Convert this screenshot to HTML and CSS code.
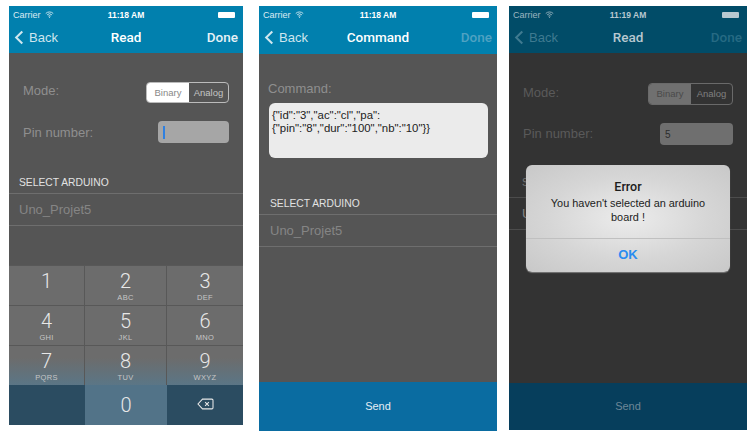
FILE: index.html
```html
<!DOCTYPE html>
<html>

<head>
    <title>Arduino Commands</title>
    <link rel="stylesheet" href="styles.css">
</head>

<body>

    <div class="screens">

        <!-- Read, keypad open -->
        <div class="phone phone-read">
            <div class="top-bar">
                <div class="status-bar">
                    <span class="carrier">Carrier
                        <svg class="wifi" viewBox="0 0 12 9"><path d="M1 3.2a7 7 0 0 1 10 0M2.8 5a4.5 4.5 0 0 1 6.4 0M4.5 6.7a2.2 2.2 0 0 1 3 0" /><circle cx="6" cy="8" r="0.8" /></svg>
                    </span>
                    <span class="time">11:18 AM</span>
                    <span class="battery"></span>
                </div>
                <div class="nav-bar">
                    <span class="back"><svg class="chevron" viewBox="0 0 10 16"><path d="M8.5 1.5 2 8l6.5 6.5" /></svg>Back</span>
                    <span class="nav-title">Read</span>
                    <span class="done">Done</span>
                </div>
            </div>
            <div class="content">
                <div class="form-row mode-row">
                    <span class="field-label">Mode:</span>
                    <div class="segment"><span class="seg-on">Binary</span><span class="seg-off">Analog</span></div>
                </div>
                <div class="form-row pin-row">
                    <span class="field-label">Pin number:</span>
                    <div class="pin-input"><span class="cursor"></span></div>
                </div>
                <div class="section-title">SELECT ARDUINO</div>
                <div class="board-row">Uno_Projet5</div>
            </div>
            <div class="keypad">
                <div class="key"><span class="digit">1</span></div>
                <div class="key"><span class="digit">2</span><span class="letters">ABC</span></div>
                <div class="key"><span class="digit">3</span><span class="letters">DEF</span></div>
                <div class="key"><span class="digit">4</span><span class="letters">GHI</span></div>
                <div class="key"><span class="digit">5</span><span class="letters">JKL</span></div>
                <div class="key"><span class="digit">6</span><span class="letters">MNO</span></div>
                <div class="key"><span class="digit">7</span><span class="letters">PQRS</span></div>
                <div class="key"><span class="digit">8</span><span class="letters">TUV</span></div>
                <div class="key"><span class="digit">9</span><span class="letters">WXYZ</span></div>
                <div class="key key-dark"></div>
                <div class="key key-zero"><span class="digit">0</span></div>
                <div class="key key-dark">
                    <svg class="backspace" viewBox="0 0 22 16"><path d="M7 1.5h12.5a1.5 1.5 0 0 1 1.5 1.5v10a1.5 1.5 0 0 1-1.5 1.5H7L1 8z" /><path d="M10.5 5.5l5 5M15.5 5.5l-5 5" /></svg>
                </div>
            </div>
        </div>

        <!-- Command -->
        <div class="phone phone-command">
            <div class="top-bar">
                <div class="status-bar">
                    <span class="carrier">Carrier
                        <svg class="wifi" viewBox="0 0 12 9"><path d="M1 3.2a7 7 0 0 1 10 0M2.8 5a4.5 4.5 0 0 1 6.4 0M4.5 6.7a2.2 2.2 0 0 1 3 0" /><circle cx="6" cy="8" r="0.8" /></svg>
                    </span>
                    <span class="time">11:18 AM</span>
                    <span class="battery"></span>
                </div>
                <div class="nav-bar">
                    <span class="back"><svg class="chevron" viewBox="0 0 10 16"><path d="M8.5 1.5 2 8l6.5 6.5" /></svg>Back</span>
                    <span class="nav-title">Command</span>
                    <span class="done done-off">Done</span>
                </div>
            </div>
            <div class="content">
                <div class="command-label">Command:</div>
                <div class="command-box">{"id":"3","ac":"cl","pa":<br>{"pin":"8","dur":"100","nb":"10"}}</div>
                <div class="section-title">SELECT ARDUINO</div>
                <div class="board-row">Uno_Projet5</div>
            </div>
            <div class="send-bar">Send</div>
        </div>

        <!-- Read, error alert -->
        <div class="phone phone-alert">
            <div class="top-bar">
                <div class="status-bar">
                    <span class="carrier">Carrier
                        <svg class="wifi" viewBox="0 0 12 9"><path d="M1 3.2a7 7 0 0 1 10 0M2.8 5a4.5 4.5 0 0 1 6.4 0M4.5 6.7a2.2 2.2 0 0 1 3 0" /><circle cx="6" cy="8" r="0.8" /></svg>
                    </span>
                    <span class="time">11:19 AM</span>
                    <span class="battery"></span>
                </div>
                <div class="nav-bar">
                    <span class="back"><svg class="chevron" viewBox="0 0 10 16"><path d="M8.5 1.5 2 8l6.5 6.5" /></svg>Back</span>
                    <span class="nav-title">Read</span>
                    <span class="done done-off">Done</span>
                </div>
            </div>
            <div class="content">
                <div class="form-row mode-row">
                    <span class="field-label">Mode:</span>
                    <div class="segment"><span class="seg-on">Binary</span><span class="seg-off">Analog</span></div>
                </div>
                <div class="form-row pin-row">
                    <span class="field-label">Pin number:</span>
                    <div class="pin-input">5</div>
                </div>
                <div class="section-title">SELECT ARDUINO</div>
                <div class="board-row">Uno_Projet5</div>
            </div>
            <div class="send-bar">Send</div>

            <div class="alert">
                <div class="alert-body">
                    <div class="alert-title">Error</div>
                    <div class="alert-text">You haven't selected an arduino<br>board !</div>
                </div>
                <div class="alert-button">OK</div>
            </div>
        </div>

    </div>

</body>

</html>
```

FILE: styles.css
```css
body {
    font-family: "Liberation Sans", Arial, sans-serif;
    background: white;
    margin: 0;
}

.screens {
    display: flex;
    align-items: flex-start;
    padding: 6px 0 0 9px;
}

.phone {
    position: relative;
    display: flex;
    flex-direction: column;
    flex-shrink: 0;
    width: 238px;
    background-color: #555555;
    color: #8f8f8f;
}

.phone-read {
    width: 234px;
    height: 419px;
    margin-right: 16px;
}

.phone-command {
    height: 425px;
    margin-right: 12px;
}

.phone-alert {
    height: 424px;
    background-color: #333333;
    color: #5a5a5a;
}

/* top bar */
.top-bar {
    height: 47px;
    flex-shrink: 0;
    background-color: #0180ae;
    color: white;
}

.phone-command .top-bar {
    height: 48px;
}

.phone-alert .top-bar {
    background-color: #014c68;
    color: #b8c8d0;
}

.status-bar {
    display: flex;
    justify-content: space-between;
    align-items: center;
    height: 15px;
    padding: 1px 8px 0 4px;
    font-size: 9px;
    position: relative;
}

.carrier {
    display: flex;
    align-items: center;
    gap: 4px;
    opacity: 0.85;
}

.wifi {
    width: 9px;
    height: 7px;
    fill: currentColor;
}

.wifi path {
    fill: none;
    stroke: currentColor;
    stroke-width: 1.2;
}

.time {
    position: absolute;
    left: 0;
    right: 0;
    text-align: center;
    font-weight: bold;
    font-size: 8.5px;
}

.battery {
    width: 17px;
    height: 6px;
    background-color: white;
    border-radius: 1px;
}

.phone-alert .battery {
    background-color: #b8c8d0;
}

.nav-bar {
    position: relative;
    display: flex;
    justify-content: space-between;
    align-items: center;
    height: 31px;
    padding: 0 5px 0 5px;
    font-size: 13px;
}

.back {
    display: flex;
    align-items: center;
    gap: 5px;
}

.chevron {
    width: 10px;
    height: 15px;
    fill: none;
    stroke: currentColor;
    stroke-width: 2.2;
}

.phone-read .back,
.phone-command .back {
    color: #cfe6ef;
}

.phone-alert .back {
    color: #3f7a90;
}

.nav-title {
    position: absolute;
    left: 0;
    right: 0;
    margin-bottom: 2px;
    text-align: center;
    font-family: Roboto, sans-serif;
    font-weight: 500;
    font-size: 13.5px;
}

.done {
    margin-bottom: 2px;
    font-family: Roboto, sans-serif;
    font-weight: 500;
    font-size: 13.5px;
    color: #e6f2f7;
}

.done-off {
    color: #4fa2c2;
}

.phone-alert .done-off {
    color: #266a83;
}

/* form */
.content {
    flex: 1;
    min-height: 0;
}

.form-row {
    display: flex;
    justify-content: space-between;
    align-items: center;
    padding: 0 14px;
    font-size: 13px;
}

.mode-row {
    margin-top: 29px;
}

.mode-row .field-label {
    padding-bottom: 5px;
}

.phone-alert .mode-row {
    margin-top: 30px;
    padding-right: 14px;
}

.phone-alert .mode-row .field-label {
    padding-bottom: 3px;
}

.phone-alert .pin-row .field-label {
    padding-bottom: 2px;
}

.pin-row {
    margin-top: 18px;
}

.segment {
    display: flex;
    width: 83px;
    height: 21px;
    box-sizing: border-box;
    border: 1px solid #bbbbbb;
    border-radius: 4px;
    overflow: hidden;
    font-size: 9.5px;
    line-height: 19px;
    text-align: center;
}

.seg-on {
    width: 42px;
    background-color: white;
    color: #888888;
}

.seg-off {
    flex: 1;
    color: #c4c4c4;
}

.phone-alert .segment {
    width: 85px;
    height: 22px;
    border-color: #6a6a6a;
    line-height: 20px;
}

.phone-alert .seg-on {
    background-color: #707070;
    color: #4a4a4a;
}

.phone-alert .seg-off {
    color: #808080;
}

.pin-input {
    display: flex;
    align-items: center;
    width: 71px;
    height: 22px;
    padding-left: 5px;
    box-sizing: border-box;
    background-color: #a6a6a6;
    border-radius: 4px;
    font-size: 10px;
    color: #2c2c2c;
}

.phone-alert .pin-input {
    width: 73px;
    background-color: #6f6f6f;
}

.cursor {
    width: 2px;
    height: 13px;
    background-color: #2f80e0;
}

.section-title {
    margin-top: 33px;
    padding-left: 10px;
    font-size: 10.3px;
    line-height: 14px;
    color: #e2e2e2;
}

.phone-alert .section-title {
    color: #777777;
    padding-left: 13px;
    margin-top: 31px;
}

.board-row {
    height: 31px;
    margin-top: 3px;
    padding-left: 10px;
    border-top: 1px solid #6e6e6e;
    border-bottom: 1px solid #6e6e6e;
    font-size: 13px;
    line-height: 31px;
    color: #858585;
}

.phone-alert .board-row {
    margin-top: 7px;
    padding-left: 13px;
    border-color: #4c4c4c;
}

/* command */
.command-label {
    margin-top: 27px;
    padding-left: 9px;
    font-size: 13px;
    line-height: 16px;
}

.command-box {
    height: 55px;
    margin: 6px 9px 0 10px;
    padding: 6px 3px;
    box-sizing: border-box;
    background-color: #ebebeb;
    border-radius: 6px;
    font-size: 11.4px;
    line-height: 13px;
    color: #222222;
}

.phone-command .section-title {
    margin-top: 39px;
    padding-left: 11px;
}

.phone-command .board-row {
    padding-left: 11px;
}

/* send */
.send-bar {
    height: 49px;
    flex-shrink: 0;
    background-color: #0a6ca1;
    color: #e4eef4;
    font-size: 11px;
    line-height: 49px;
    text-align: center;
}

.phone-alert .send-bar {
    height: 47px;
    line-height: 47px;
    background-color: #063e5c;
    color: #6d8797;
}

/* keypad */
.keypad {
    display: grid;
    grid-template-columns: 76px 82px 76px;
    grid-template-rows: repeat(4, 40px);
    flex-shrink: 0;
    background: linear-gradient(#6c6c6c 0, #6c6c6c 58%, #5b7686 75%);
    color: #e8e8e8;
}

.key {
    display: flex;
    flex-direction: column;
    align-items: center;
    box-sizing: border-box;
    padding-top: 3px;
    border-top: 1px solid #585858;
    border-right: 1px solid #585858;
}

.key:nth-child(3n) {
    border-right: none;
}

.digit {
    font-family: Roboto, sans-serif;
    font-weight: 300;
    font-size: 20px;
    line-height: 24px;
}

.letters {
    font-size: 7.5px;
    line-height: 9px;
    color: #c6c6c6;
    letter-spacing: 0.3px;
}

.key-dark {
    background-color: #2b4c61;
    border: none;
}

.key-zero {
    background-color: #527388;
    border: none;
    padding-top: 8px;
}

.backspace {
    width: 17px;
    height: 12px;
    margin-top: 10px;
    fill: none;
    stroke: #e8e8e8;
    stroke-width: 1.4;
}

/* alert over the page */
.alert {
    position: absolute;
    left: 17px;
    top: 159px;
    width: 204px;
    height: 107px;
    background: radial-gradient(ellipse at center, #ececec 0, #d6d6d6 55%, #c8c8c8 100%);
    border-radius: 6px;
    box-shadow: 0 1px 1px #777777;
    color: #1c1c1c;
    display: flex;
    flex-direction: column;
    text-align: center;
}

.alert-body {
    flex: 1;
    padding-top: 14px;
    border-bottom: 1px solid #c0c0c0;
}

.alert-title {
    font-family: Roboto, sans-serif;
    font-weight: 500;
    font-size: 12.5px;
    line-height: 16px;
}

.alert-text {
    font-size: 10.9px;
    line-height: 14px;
    margin-top: 1px;
}

.alert-button {
    height: 33px;
    font-size: 13px;
    font-weight: bold;
    line-height: 32px;
    color: #2a8cf0;
}
```
